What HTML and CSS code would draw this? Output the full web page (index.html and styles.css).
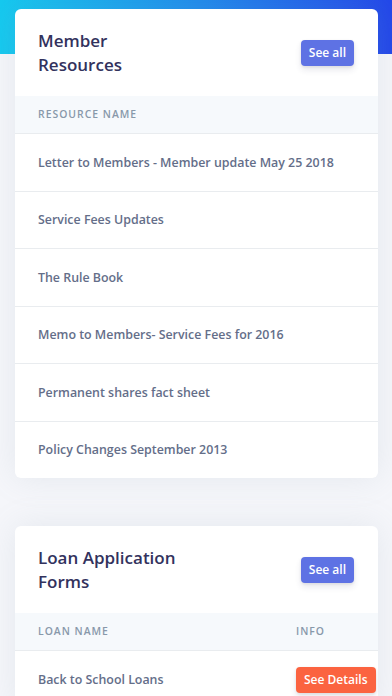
FILE: index.html
```html
<!DOCTYPE html>
<html lang="en">
<head>
<meta charset="utf-8">
<title>Member Resources</title>
<link rel="stylesheet" href="styles.css">
</head>
<body>
<div class="hero"></div>
<main class="content">
  <section class="card">
    <div class="card-header">
      <h3 class="card-title">Member Resources</h3>
      <a class="btn btn-primary">See all</a>
    </div>
    <div class="table-wrap">
      <table class="table">
        <thead>
          <tr><th>Resource name</th></tr>
        </thead>
        <tbody>
          <tr><td>Letter to Members - Member update May 25 2018</td></tr>
          <tr><td>Service Fees Updates</td></tr>
          <tr><td>The Rule Book</td></tr>
          <tr><td>Memo to Members- Service Fees for 2016</td></tr>
          <tr><td>Permanent shares fact sheet</td></tr>
          <tr><td>Policy Changes September 2013</td></tr>
        </tbody>
      </table>
    </div>
  </section>

  <section class="card">
    <div class="card-header">
      <h3 class="card-title">Loan Application Forms</h3>
      <a class="btn btn-primary">See all</a>
    </div>
    <div class="table-wrap">
      <table class="table table-wide">
        <thead>
          <tr><th class="col-name">Loan name</th><th>Info</th></tr>
        </thead>
        <tbody>
          <tr><td class="col-name">Back to School Loans</td><td class="col-info"><a class="btn btn-warning">See Details</a></td></tr>
        </tbody>
      </table>
    </div>
  </section>
</main>
</body>
</html>
```

FILE: styles.css
```css
* { box-sizing: border-box; }

html, body {
  margin: 0;
  padding: 0;
}

body {
  background: #f5f6fa;
  font-family: "Open Sans", "Noto Sans", sans-serif;
  color: #525f7f;
  overflow: hidden;
  height: 696px;
}

.hero {
  height: 54px;
  background: linear-gradient(90deg, #15c9ef 0%, #1f8cec 50%, #2347e9 100%);
}

.content {
  margin-top: -45px;
  padding: 0 14px 0 15px;
  display: flex;
  flex-direction: column;
  gap: 48px;
}

.card {
  background: #fff;
  border-radius: 6px;
  box-shadow: 0 0 32px 0 rgba(136, 152, 170, 0.15);
  overflow: hidden;
}

.card-header {
  display: flex;
  align-items: center;
  justify-content: space-between;
  padding: 20px 24px 19px 23px;
}

.card-title {
  margin: 0;
  width: 140px;
  font-size: 17px;
  line-height: 24px;
  font-weight: 600;
  color: #32325d;
}

.btn {
  display: inline-block;
  font-size: 12px;
  line-height: 18px;
  font-weight: 600;
  color: #fff;
  padding: 4px 8px;
  border-radius: 4px;
  white-space: nowrap;
  box-shadow: 0 4px 6px rgba(50, 50, 93, 0.11), 0 1px 3px rgba(0, 0, 0, 0.08);
}

.btn-primary { background: #5e72e4; }
.btn-warning { background: #fb6340; }

.table-wrap {
  overflow: hidden;
}

.table {
  width: 100%;
  border-collapse: collapse;
}

.table-wide {
  width: 420px;
}

.table th {
  text-align: left;
  background: #f6f9fc;
  color: #8898aa;
  font-size: 10.4px;
  font-weight: 600;
  text-transform: uppercase;
  letter-spacing: 1px;
  line-height: 15px;
  padding: 11px 24px 11px 23px;
  border-bottom: 1px solid #e9ecef;
  white-space: nowrap;
}

.table td {
  font-size: 12.4px;
  font-weight: 600;
  line-height: 20.5px;
  padding: 18.5px 24px 17.5px 23px;
  border-top: 1px solid #e9ecef;
  white-space: nowrap;
  color: #646e89;
}

.table tbody tr:first-child td {
  border-top: 0;
}

.table .col-name {
  width: 258px;
}

.table td.col-info {
  padding-top: 16px;
  padding-bottom: 16px;
}
```
